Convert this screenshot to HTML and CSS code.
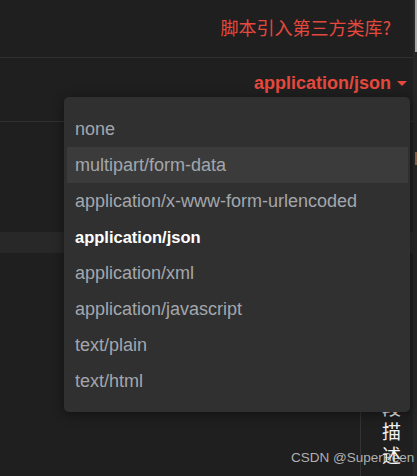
FILE: index.html
```html
<!DOCTYPE html>
<html lang="zh">
<head>
<meta charset="utf-8">
<title>Dropdown</title>
<link rel="stylesheet" href="styles.css">
</head>
<body>
<div class="page">
  <div class="content">
    <div class="head-row">
      <span class="head-title">脚本引入第三方类库?</span>
    </div>
    <div class="type-row">
      <span class="type-trigger">application/json<span class="caret"></span></span>
    </div>
    <div class="spacer"></div>
    <div class="band"></div>
    <div class="table-row">
      <div class="cell-main"></div>
      <div class="cell-desc">字段描述</div>
    </div>

    <ul class="menu">
      <li class="menu-item">none</li>
      <li class="menu-item is-hover">multipart/form-data</li>
      <li class="menu-item">application/x-www-form-urlencoded</li>
      <li class="menu-item is-active">application/json</li>
      <li class="menu-item">application/xml</li>
      <li class="menu-item">application/javascript</li>
      <li class="menu-item">text/plain</li>
      <li class="menu-item">text/html</li>
    </ul>

    <div class="watermark">CSDN @SuperBeen</div>
  </div>
  <div class="scrollbar">
    <div class="thumb"></div>
    <div class="mark"></div>
  </div>
</div>
</body>
</html>
```

FILE: styles.css
```css
html, body {
  margin: 0;
  padding: 0;
  background: #1f1f1f;
  font-family: "Liberation Sans", Arial, "Noto Sans CJK SC", sans-serif;
}

.page {
  display: flex;
  width: 417px;
  height: 476px;
  overflow: hidden;
}

.content {
  position: relative;
  flex: 1;
  display: flex;
  flex-direction: column;
}

.head-row {
  height: 57px;
  border-bottom: 1px solid #313131;
  display: flex;
  justify-content: flex-end;
  align-items: flex-start;
  padding-right: 22px;
}

.head-title {
  margin-top: 14px;
  font-family: "Noto Sans CJK SC", sans-serif;
  font-size: 18px;
  line-height: 26px;
  color: #e5483d;
}

.type-row {
  height: 63px;
  border-bottom: 1px solid #313131;
  display: flex;
  justify-content: flex-end;
  align-items: flex-start;
  padding-right: 6px;
}

.type-trigger {
  margin-top: 14px;
  font-size: 18px;
  font-weight: bold;
  line-height: 22px;
  color: #e5483d;
  display: flex;
  align-items: center;
}

.caret {
  display: inline-block;
  width: 0;
  height: 0;
  margin-left: 6px;
  border-left: 5px solid transparent;
  border-right: 5px solid transparent;
  border-top: 5px solid #e5483d;
}

.spacer {
  height: 110px;
}

.band {
  height: 21px;
  background: #282828;
}

.table-row {
  flex: 1;
  display: flex;
}

.cell-main {
  width: 360px;
  border-right: 1px solid #333333;
}

.cell-desc {
  width: 20px;
  padding: 118px 0 0 21px;
  font-family: "Noto Sans CJK SC", sans-serif;
  font-size: 19px;
  line-height: 24px;
  color: #f2f2f2;
  word-break: break-all;
}

.menu {
  position: absolute;
  left: 64px;
  top: 97px;
  width: 346px;
  height: 315px;
  box-sizing: border-box;
  margin: 0;
  padding: 14px 2px 13px 3px;
  list-style: none;
  background: #303030;
  border-radius: 5px;
  box-shadow: 0 2px 12px rgba(0, 0, 0, 0.45);
}

.menu-item {
  height: 36px;
  line-height: 36px;
  padding-left: 8px;
  font-size: 18px;
  color: #a3a7ad;
  white-space: nowrap;
}

.menu-item.is-hover {
  background: #3b3b3b;
}

.menu-item.is-active {
  color: #ffffff;
  font-size: 16.5px;
  font-weight: bold;
}

.watermark {
  position: absolute;
  left: 291px;
  top: 450px;
  font-size: 13.5px;
  line-height: 16px;
  color: rgba(220, 220, 220, 0.78);
  white-space: nowrap;
}

.scrollbar {
  width: 4px;
  background: #262626;
  display: flex;
  flex-direction: column;
  align-items: flex-end;
}

.thumb {
  width: 2px;
  height: 52px;
  background: #a8a8a8;
}

.mark {
  width: 2px;
  height: 13px;
  margin-top: 100px;
  background: #8f6245;
}
```
